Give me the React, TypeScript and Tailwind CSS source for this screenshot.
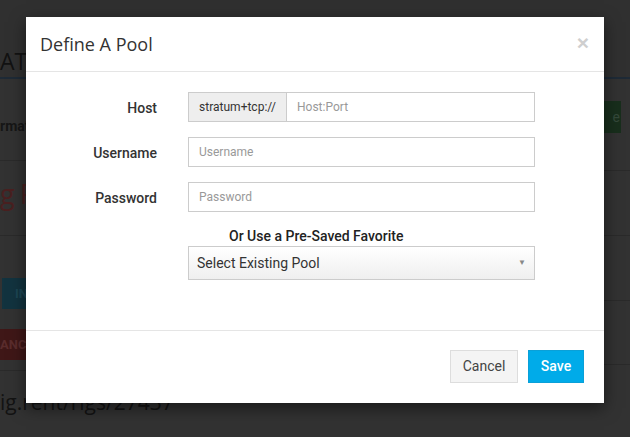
import React from "react";

const roboto = { fontFamily: "Roboto, 'Liberation Sans', sans-serif" };

export default function App() {
  return (
    <div className="relative h-[437px] w-[630px] overflow-hidden bg-[#323232]" style={roboto}>
      {/* dimmed page behind the modal */}
      <div className="flex h-[79px] items-end border-b-2 border-[#1e2a36] bg-[#303030]">
        <div className="pb-[3px] text-[23px] leading-[26px] text-[#121212]" style={{ fontFamily: "'Open Sans', sans-serif" }}>
          AT
        </div>
      </div>
      <div className="flex justify-between">
        <div className="flex w-[300px] flex-col">
          <div className="h-[82px] border-b border-[#2a2a2a] pt-[37px] text-[14px] font-bold leading-[20px] text-[#161616]">
            rmat
          </div>
          <div className="h-[75px] border-b border-[#2a2a2a] pt-[15px] text-[27px] leading-[36px] tracking-[-1px] text-[#4a2020]" style={{ fontFamily: "'Open Sans', sans-serif" }}>
            g F
          </div>
          <div className="h-[135px] border-b border-[#2a2a2a] pt-[42px]">
            <div className="ml-[2px] flex h-[31px] w-[80px] items-center bg-[#12333f] pl-[13px] text-[13px] font-bold text-[#1d4654]">
              IN
            </div>
            <div className="mt-[20px] flex h-[31px] w-[80px] items-center bg-[#3f1717] text-[13px] font-bold text-[#5a2c2c]">
              ANC
            </div>
          </div>
          <div className="pt-[16px] text-[21px] leading-[30px] text-[#131313]" style={{ fontFamily: "'Open Sans', sans-serif" }}>
            ig.rent/rigs/27437
          </div>
        </div>
        <div className="flex w-[26px] flex-col">
          <div className="h-[92px] border-b border-[#2a2a2a] pt-[22px]">
            <div className="flex h-[32px] w-[17px] items-center justify-end bg-[#182e1c] pr-[1px] text-[14px] text-[#34493a]">
              e
            </div>
          </div>
          <div className="h-[65px] border-b border-[#2a2a2a]" />
          <div className="h-[65px] border-b border-[#2a2a2a]" />
          <div className="h-[64px] border-b border-[#2a2a2a]" />
        </div>
      </div>

      {/* modal */}
      <div className="absolute left-[26px] top-[17px] flex h-[386px] w-[578px] flex-col bg-white shadow-[0_5px_15px_rgba(0,0,0,0.5)]">
        <div className="flex h-[55px] items-center justify-between border-b border-[#e5e5e5] pl-[14px] pr-[15px]">
          <div className="pt-[1px] text-[18px] text-[#333]" style={{ fontFamily: "'Open Sans', sans-serif" }}>
            Define A Pool
          </div>
          <div className="mb-[4px] text-[21px] font-bold leading-none text-[#cfcfcf]" style={{ fontFamily: "'Liberation Sans', sans-serif" }}>
            ×
          </div>
        </div>

        <div className="flex h-[258px] flex-col pt-[20px]">
          <Row label="Host">
            <div className="flex h-[30px] w-[347px] border border-[#ccc]">
              <div className="flex w-[98px] items-center justify-center border-r border-[#ccc] bg-[#eee] text-[12px] text-[#333]">
                stratum+tcp://
              </div>
              <div className="flex flex-1 items-center pl-[10px] text-[12px] text-[#999]">Host:Port</div>
            </div>
          </Row>
          <Row label="Username">
            <div className="flex h-[30px] w-[347px] items-center border border-[#ccc] pl-[10px] text-[12px] text-[#999]">
              Username
            </div>
          </Row>
          <Row label="Password">
            <div className="flex h-[30px] w-[347px] items-center border border-[#ccc] pl-[10px] text-[12px] text-[#999]">
              Password
            </div>
          </Row>
          <div className="ml-[162px] mt-[-1px] flex flex-col">
            <div className="pl-[41px] text-[14px] font-medium leading-[20px] text-[#222]">Or Use a Pre-Saved Favorite</div>
            <div className="flex h-[34px] w-[347px] items-center justify-between border border-[#ccc] bg-gradient-to-b from-white to-[#efefef] pl-[8px] pr-[8px] text-[14px] text-[#333]">
              <span>Select Existing Pool</span>
              <span className="text-[8px] text-[#888]">▼</span>
            </div>
          </div>
        </div>

        <div className="flex flex-1 items-start justify-end gap-[10px] border-t border-[#e5e5e5] pr-[20px] pt-[19px]">
          <div className="flex h-[33px] w-[68px] items-center justify-center border border-[#ddd] bg-[#f4f4f4] text-[14px] text-[#444]">
            Cancel
          </div>
          <div className="flex h-[33px] w-[56px] items-center justify-center border border-[#0aa0d8] bg-[#00abe9] text-[14px] font-medium text-white">
            Save
          </div>
        </div>
      </div>
    </div>
  );
}

function Row({ label, children }: { label: string; children: React.ReactNode }) {
  return (
    <div className="mb-[15px] flex items-center">
      <div className="w-[131px] pt-[2px] text-right text-[14px] font-medium text-[#333]">{label}</div>
      <div className="ml-[31px]">{children}</div>
    </div>
  );
}
